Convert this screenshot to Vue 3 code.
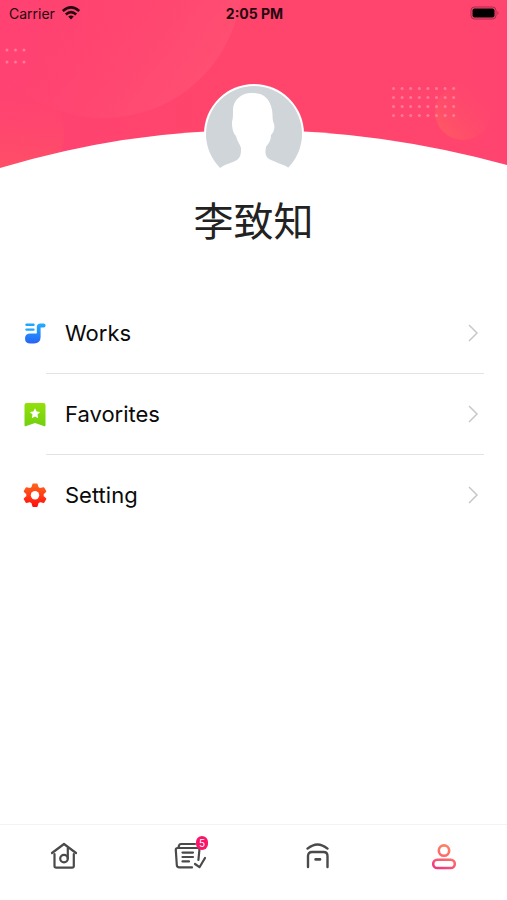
<template>
  <div class="profile-page">
    <header class="hero">
      <svg class="hero-bg" viewBox="0 0 507 170" aria-hidden="true">
        <defs>
          <linearGradient id="heroFill" x1="0" y1="0" x2="1" y2="0">
            <stop offset="0" stop-color="#ff4272" />
            <stop offset="0.45" stop-color="#ff456b" />
            <stop offset="1" stop-color="#ff446f" />
          </linearGradient>
          <linearGradient id="bigCircle" x1="0.4" y1="0.4" x2="0.95" y2="0.8">
            <stop offset="0" stop-color="#ff4272" stop-opacity="0" />
            <stop offset="1" stop-color="#ff5073" />
          </linearGradient>
          <linearGradient id="leftCircle" x1="0.5" y1="0" x2="0.4" y2="1">
            <stop offset="0" stop-color="#ff4570" stop-opacity="0" />
            <stop offset="1" stop-color="#ff5660" />
          </linearGradient>
          <linearGradient id="rightCircle" x1="1" y1="0" x2="0.1" y2="0.8">
            <stop offset="0.1" stop-color="#ff466e" stop-opacity="0" />
            <stop offset="1" stop-color="#ff5665" />
          </linearGradient>
        </defs>
        <rect width="507" height="170" fill="url(#heroFill)" />
        <circle cx="104" cy="-20" r="138" fill="url(#bigCircle)" />
        <circle cx="8" cy="134" r="56" fill="url(#leftCircle)" />
        <circle cx="463" cy="112" r="28" fill="url(#rightCircle)" />
        <g fill="#ff8ba6" fill-opacity="0.75">
          <circle v-for="dot in leftDots" :key="dot.id" :cx="dot.x" :cy="dot.y" r="1.5" />
          <circle v-for="dot in rightDots" :key="dot.id" :cx="dot.x" :cy="dot.y" r="1.5" />
        </g>
        <path d="M0 168Q127 130 253 130T507 165V171H0Z" fill="#fff" />
      </svg>
      <div class="status-bar">
        <span class="carrier">
          Carrier
          <svg width="20" height="14" viewBox="0 0 18 14" aria-hidden="true">
            <g fill="none" stroke="#240a10" stroke-width="2.6">
              <path d="M.8 5Q9-2.2 17.2 5" />
              <path d="M3.8 8.4Q9 4 14.2 8.4" />
            </g>
            <path d="M6.2 10.4Q9 8.4 11.8 10.4L9 13.5Z" fill="#240a10" />
          </svg>
        </span>
        <span class="time">2:05 PM</span>
        <svg class="battery" width="30" height="14" viewBox="0 0 30 14" aria-hidden="true">
          <rect x="1" y="1" width="25" height="12" rx="3.5" fill="none" stroke="#a82a48" stroke-width="1" />
          <rect x="2.5" y="2.5" width="22" height="9" rx="2" fill="#000" />
          <path d="M27.5 5Q29.5 7 27.5 9Z" fill="#a82a48" />
        </svg>
      </div>
    </header>

    <section class="user">
      <svg class="avatar" width="100" height="100" viewBox="0 0 100 100" role="img" aria-label="李致知">
        <circle cx="50" cy="50" r="50" fill="#fff" />
        <circle cx="50" cy="50" r="48" fill="#d0d5d9" />
        <path
          d="M49 9C40 8 29 14 29 26C29 31 29 34 28 38C28 44 29 49 32 52C33 57 36 60 37 64C37 69 37 73 33 76C28 79 21 80 16 84V101H85V84C79 80 70 78 65 75C61 72 61 69 62 63C64 60 67 57 67 51C70 48 71 44 70 40C68 35 69 32 68 26C66 15 60 9 49 9Z"
          fill="#fff"
        />
      </svg>
      <h1 class="name">李致知</h1>
    </section>

    <nav class="menu" aria-label="Profile">
      <button v-for="item in menuItems" :key="item.key" type="button" class="menu-item">
        <svg class="menu-icon" width="24" height="26" viewBox="0 0 24 26" aria-hidden="true">
          <template v-if="item.key === 'works'">
            <defs>
              <linearGradient id="worksFill" x1="0" y1="3" x2="0" y2="23" gradientUnits="userSpaceOnUse">
                <stop offset="0" stop-color="#20b1ff" />
                <stop offset="1" stop-color="#2864f5" />
              </linearGradient>
            </defs>
            <path
              d="M17.5 3.4H20.6Q22.6 3.4 22.6 5.4T20.6 7.4H17.6V17Q17.6 23.4 11 23.4H7.5Q2 23.4 2 18.4T7.5 13.4H13.8V7Q13.8 3.4 17.5 3.4Z"
              fill="url(#worksFill)"
            />
            <path d="M3.5 4.8H10.5M3.5 9.6H10.5" fill="none" stroke="#20a6ff" stroke-width="2.4" stroke-linecap="round" />
          </template>
          <template v-else-if="item.key === 'favorites'">
            <defs>
              <linearGradient id="favFill" x1="0" y1="0" x2="0" y2="1">
                <stop offset="0" stop-color="#93e00b" />
                <stop offset="1" stop-color="#72d00e" />
              </linearGradient>
            </defs>
            <path d="M3.5 2H20.5Q22.5 2 22.5 4V24Q22.5 26 20.7 25L12 22L3.3 25Q1.5 26 1.5 24V4Q1.5 2 3.5 2Z" fill="url(#favFill)" />
            <path d="M12 7.2L13.6 10.6L17.2 11L14.5 13.5L15.2 17.2L12 15.4L8.8 17.2L9.5 13.5L6.8 11L10.4 10.6Z" fill="#fff" />
          </template>
          <template v-else>
            <defs>
              <linearGradient id="gearFill" x1="0" y1="1" x2="0" y2="25" gradientUnits="userSpaceOnUse">
                <stop offset="0" stop-color="#ff6a1c" />
                <stop offset="1" stop-color="#ff0d10" />
              </linearGradient>
            </defs>
            <g fill="url(#gearFill)" stroke="url(#gearFill)" stroke-linejoin="round">
              <path
                d="M10.2 2.4H13.8L14.8 5.8L17 7L20.6 6.2L22.4 9.4L19.8 11.8V14.4L22.4 16.8L20.6 20L17 19.2L14.8 20.6L13.8 24H10.2L9.2 20.6L7 19.2L3.4 20L1.6 16.8L4.2 14.4V11.8L1.6 9.4L3.4 6.2L7 7L9.2 5.8Z"
                stroke-width="1.8"
              />
            </g>
            <circle cx="12" cy="13.2" r="4.2" fill="#fff" />
          </template>
        </svg>
        <span class="menu-label">{{ item.label }}</span>
        <svg class="chevron" width="12" height="18" viewBox="0 0 12 18" aria-hidden="true">
          <path d="M2 1L10 9L2 17" fill="none" stroke="#c7c7c9" stroke-width="1.5" />
        </svg>
      </button>
    </nav>

    <nav class="tab-bar" aria-label="Main">
      <button
        v-for="tab in tabs"
        :key="tab.key"
        type="button"
        class="tab"
        :aria-label="tab.title"
        :aria-current="activeTab === tab.key ? 'page' : undefined"
        @click="activeTab = tab.key"
      >
        <span class="tab-icon">
          <svg v-if="tab.key === 'home'" width="32" height="32" viewBox="0 0 32 32" aria-hidden="true">
            <g fill="none" stroke="currentColor" stroke-width="2.2" stroke-linecap="round" stroke-linejoin="round">
              <path d="M5 13L17 4L29 13" />
              <path d="M7.5 14V26Q7.5 27.6 9.3 27.6H25Q26.8 27.6 26.8 26V14" />
              <circle cx="17" cy="18.6" r="3.8" />
              <path d="M20.8 18.6V8" />
            </g>
          </svg>
          <svg v-else-if="tab.key === 'list'" width="34" height="32" viewBox="0 0 34 32" aria-hidden="true">
            <g fill="none" stroke="currentColor" stroke-width="2.2" stroke-linecap="round" stroke-linejoin="round">
              <path d="M5.5 8L6 5.5Q6.4 4 8 4H22" />
              <path d="M25.4 20L26.4 10Q26.6 8 24.6 8H4.8Q2.6 8 2.8 10L3.8 25Q3.9 27.4 6.4 27.4H19" />
              <path d="M9.5 12.6H20M9.5 17H20M9.5 21.4H16" />
              <path d="M22 24L26.5 27.2L32 18" />
            </g>
          </svg>
          <svg v-else-if="tab.key === 'studio'" width="32" height="32" viewBox="0 0 32 32" aria-hidden="true">
            <g fill="none" stroke="currentColor" stroke-width="2.4" stroke-linecap="round" stroke-linejoin="round">
              <path d="M6.5 8.6Q16.5 .2 26.5 8.6" />
              <path d="M7 27V16Q7 12 11 12H22.5Q26.5 12 26.5 16V27" />
              <path d="M14.6 19.4H19" stroke-width="2.6" />
            </g>
          </svg>
          <svg v-else width="32" height="32" viewBox="0 0 32 32" aria-hidden="true">
            <defs>
              <linearGradient id="meStroke" x1="20" y1="4" x2="10" y2="28" gradientUnits="userSpaceOnUse">
                <stop offset="0" stop-color="#ff8561" />
                <stop offset="0.65" stop-color="#fb6070" />
                <stop offset="1" stop-color="#f2377f" />
              </linearGradient>
            </defs>
            <g fill="none" stroke="url(#meStroke)" stroke-width="2.6">
              <circle cx="16" cy="10.6" r="5.2" />
              <rect x="5.2" y="19.8" width="21.6" height="8.2" rx="4.1" />
            </g>
          </svg>
          <span v-if="tab.badge" class="badge">{{ tab.badge }}</span>
        </span>
      </button>
    </nav>
  </div>
</template>

<script setup>
import { ref } from 'vue'

const menuItems = [
  { key: 'works', label: 'Works' },
  { key: 'favorites', label: 'Favorites' },
  { key: 'setting', label: 'Setting' }
]

const tabs = [
  { key: 'home', title: 'Home' },
  { key: 'list', title: 'List', badge: 5 },
  { key: 'studio', title: 'Studio' },
  { key: 'me', title: 'Me' }
]

const activeTab = ref('me')

// dot patterns in the header
const makeDots = (cols, rows, x, y, gapX, gapY) => {
  const dots = []
  for (let r = 0; r < rows; r++) {
    for (let c = 0; c < cols; c++) {
      dots.push({ id: `${r}-${c}`, x: x + c * gapX, y: y + r * gapY })
    }
  }
  return dots
}

const leftDots = makeDots(3, 2, 7, 50, 8.5, 12)
const rightDots = makeDots(8, 4, 393.5, 88.5, 8.6, 9)
</script>

<style>
body {
  margin: 0;
  background: #fff;
}
</style>

<style scoped>
.profile-page {
  display: flex;
  flex-direction: column;
  min-height: 100vh;
  font-family: Inter, 'Noto Sans CJK SC', sans-serif;
  color: #0a0a0a;
}

button {
  padding: 0;
  border: 0;
  background: none;
  color: inherit;
  font: inherit;
  cursor: pointer;
}

.hero {
  position: relative;
}

.hero-bg {
  display: block;
  width: 100%;
}

.status-bar {
  position: absolute;
  top: 0;
  left: 0;
  right: 0;
  display: grid;
  grid-template-columns: 1fr auto 1fr;
  align-items: center;
  height: 26px;
  padding: 0 7px 0 9px;
  color: #240a10;
  font-size: 14px;
}

.carrier {
  display: flex;
  align-items: center;
  gap: 6px;
}

.time {
  font-weight: 700;
}

.battery {
  justify-self: end;
}

.user {
  position: relative;
  display: flex;
  flex-direction: column;
  align-items: center;
  margin-top: -86px;
}

.avatar {
  display: block;
}

.name {
  margin: 8px 0 0;
  color: #222;
  font-size: 40px;
  font-weight: 400;
  line-height: 60px;
}

.menu {
  display: flex;
  flex-direction: column;
  margin-top: 41px;
  padding: 0 23px;
}

.menu-item {
  position: relative;
  display: flex;
  align-items: center;
  height: 81px;
  padding-bottom: 2px;
  text-align: left;
}

.menu-item:not(:last-child)::after {
  content: '';
  position: absolute;
  right: 0;
  bottom: 0;
  left: 23px;
  height: 1px;
  background: #e3e3e4;
}

.menu-label {
  flex: 1;
  margin-left: 18px;
  font-size: 22px;
  line-height: 28px;
}

.chevron {
  margin-right: 5px;
}

.tab-bar {
  display: flex;
  height: 75px;
  margin-top: auto;
  border-top: 1px solid #f3f3f3;
  color: #4a4a4a;
}

.tab {
  flex: 1;
  display: flex;
  justify-content: center;
  padding-top: 15px;
}

.tab-icon {
  position: relative;
  display: flex;
}

.badge {
  position: absolute;
  top: -4px;
  right: -1px;
  width: 12px;
  height: 14px;
  border-radius: 6px;
  background: #fb1468;
  color: #fff;
  font-size: 10px;
  line-height: 14px;
  text-align: center;
}
</style>
